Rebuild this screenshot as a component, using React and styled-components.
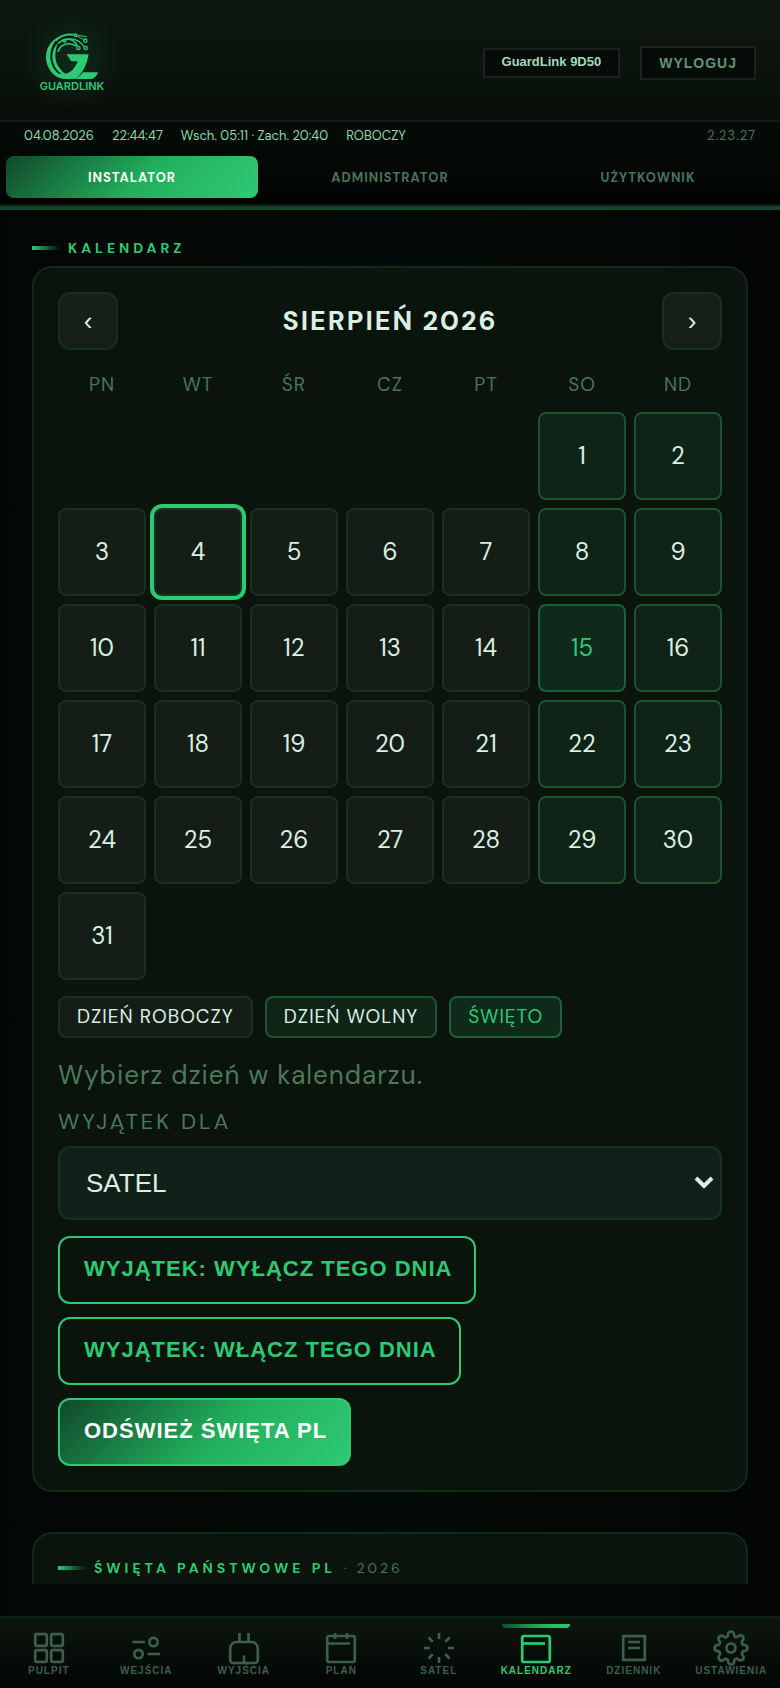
import React, { useState } from 'react';
import styled, { createGlobalStyle, css } from 'styled-components';
import { FiSettings } from 'react-icons/fi';

const sans = '"DM Sans", Inter, sans-serif';
const arial = '"Liberation Sans", Arial, sans-serif';
const accent = '#2ec973';
const muted = '#477559';
const gradient = 'linear-gradient(135deg, #11482b 0%, #22b05c 55%, #2fc976 100%)';

const GlobalStyle = createGlobalStyle`
  * {
    box-sizing: border-box;
  }
  body {
    margin: 0;
    background: #030806;
    color: #d9f0e2;
    font-family: ${sans};
  }
`;

const Page = styled.div`
  display: flex;
  flex-direction: column;
  height: 100vh;
  background: linear-gradient(90deg, #020604 0%, #040a07 50%, #020503 100%);
`;

const Header = styled.header`
  display: flex;
  align-items: center;
  justify-content: space-between;
  height: 122px;
  padding: 4px 24px 0 27px;
  border-bottom: 2px solid #141b16;
  background:
    radial-gradient(circle at 72px 60px, #0e2a1b 0, transparent 50px),
    linear-gradient(180deg, #0d1810 0%, #080f0a 100%);
`;

const Logo = styled.div`
  display: flex;
  flex-direction: column;
  align-items: center;
  width: 90px;
  color: ${accent};
  font: 600 11px/12px Inter, sans-serif;
`;

const HeaderActions = styled.div`
  display: flex;
  align-items: center;
  gap: 20px;
  padding-top: 2px;
`;

const Device = styled.div`
  height: 30px;
  padding: 0 17px;
  border: 2px solid #1c231e;
  background: #050c08;
  color: #a3dbb8;
  font: bold 13px/24px ${arial};
`;

const Logout = styled.button`
  height: 34px;
  padding: 0 17px;
  border: 2px solid #1c231e;
  background: #050c08;
  color: #5f9673;
  font: bold 14px/20px ${arial};
  letter-spacing: 1px;
`;

const Toolbar = styled.div`
  border-bottom: 4px solid #10482b;
  background: linear-gradient(180deg, #050c08 0%, #010302 100%);
`;

const Status = styled.div`
  display: flex;
  gap: 18px;
  padding: 4px 24px;
  color: #86dba4;
  font-size: 13px;
  line-height: 20px;
`;

const Version = styled.span`
  margin-left: auto;
  color: ${muted};
  letter-spacing: 1px;
`;

const Tabs = styled.div`
  display: grid;
  grid-template-columns: repeat(3, 1fr);
  gap: 6px;
  padding: 6px;
  border-bottom: 2px solid #121713;
`;

const Tab = styled.button`
  height: 42px;
  padding: 2px 0 0;
  border: 0;
  border-radius: 8px;
  background: ${(p) => (p.$active ? gradient : 'transparent')};
  color: ${(p) => (p.$active ? '#fff' : muted)};
  font: bold 13px/16px ${sans};
  letter-spacing: 1px;
`;

const Main = styled.main`
  flex: 1;
  min-height: 0;
  overflow: hidden;
  margin-bottom: 32px;
  padding: 28px 32px 0;
`;

const SectionTitle = styled.h2`
  display: flex;
  align-items: center;
  gap: 8px;
  margin: 0;
  color: ${accent};
  font-size: 14px;
  font-weight: 700;
  line-height: 20px;
  letter-spacing: 4px;
  &::before {
    content: '';
    width: 28px;
    height: 4px;
    background: linear-gradient(90deg, ${accent}, transparent);
  }
`;

const Year = styled.span`
  color: ${muted};
  font-weight: 400;
  letter-spacing: 3px;
`;

const Card = styled.section`
  margin: 8px 0 40px;
  padding: 24px;
  border: 2px solid #10291a;
  border-radius: 20px;
  background: #0a130c;
`;

const MonthBar = styled.div`
  display: flex;
  align-items: center;
  justify-content: space-between;
`;

const Arrow = styled.button`
  width: 60px;
  height: 58px;
  border: 2px solid #173021;
  border-radius: 12px;
  background: #171f19;
  color: #d9f0e2;
  font: 26px/28px ${arial};
`;

const Month = styled.h1`
  margin: 0;
  font-size: 27px;
  font-weight: 700;
  line-height: 32px;
  letter-spacing: 2px;
`;

const Grid = styled.div`
  display: grid;
  grid-template-columns: repeat(7, 1fr);
  gap: 8px;
`;

const Weekdays = styled(Grid)`
  padding: 22px 0 14px;
  color: ${muted};
  font-size: 19px;
  line-height: 26px;
  letter-spacing: 1px;
  text-align: center;
`;

const kinds = {
  work: css`
    border-color: #193022;
    background: #151d17;
    color: #d9f0e2;
  `,
  free: css`
    border-color: #1d5430;
    background: #0f2316;
    color: #d9f0e2;
  `,
  holiday: css`
    border-color: #1b6139;
    background: #0f2a1b;
    color: ${accent};
  `,
};

const Day = styled.button`
  aspect-ratio: 1;
  padding: 0;
  border: 2px solid;
  border-radius: 8px;
  ${(p) => kinds[p.$kind]}
  font: 24px/28px ${sans};
  grid-column-start: ${(p) => p.$start || 'auto'};
  box-shadow: ${(p) => (p.$selected ? `0 0 0 4px ${accent}` : 'none')};
`;

const Legend = styled.div`
  display: flex;
  flex-wrap: wrap;
  gap: 12px;
  margin: 16px 0;
`;

const LegendItem = styled.span`
  padding: 6px 17px;
  border: 2px solid;
  border-radius: 8px;
  ${(p) => kinds[p.$kind]}
  font-size: 19px;
  line-height: 26px;
  letter-spacing: 1px;
`;

const Hint = styled.p`
  margin: 0;
  color: #4a7a5a;
  font-size: 26px;
  line-height: 42px;
  letter-spacing: 1px;
`;

const Label = styled.label`
  display: block;
  margin: 12px 0 10px;
  color: #4a7a5a;
  font-size: 22px;
  line-height: 28px;
  letter-spacing: 3px;
`;

const SelectBox = styled.div`
  display: grid;
  align-items: center;
  margin-bottom: 16px;
  & > * {
    grid-area: 1 / 1;
  }
  & > svg {
    justify-self: end;
    margin-right: 8px;
    pointer-events: none;
  }
`;

const Select = styled.select`
  appearance: none;
  width: 100%;
  height: 74px;
  padding: 0 26px;
  border: 2px solid #173024;
  border-radius: 12px;
  background: #12201a;
  color: #d9f0e2;
  font: 26px/32px ${arial};
`;

const Actions = styled.div`
  display: flex;
  flex-direction: column;
  align-items: flex-start;
  gap: 13px;
`;

const Action = styled.button`
  height: 68px;
  padding: 0 22px 2px 24px;
  border: 2px solid ${accent};
  border-radius: 12px;
  background: ${(p) => (p.$primary ? gradient : 'transparent')};
  color: ${(p) => (p.$primary ? '#fff' : accent)};
  font: bold 22px/28px ${arial};
  letter-spacing: 1px;
`;

const BottomNav = styled.nav`
  display: grid;
  grid-template-columns: repeat(8, 1fr);
  height: 72px;
  border-top: 2px solid #0d2417;
  background: linear-gradient(180deg, #0c170f 0%, #020504 100%);
`;

const NavItem = styled.a`
  position: relative;
  display: flex;
  flex-direction: column;
  align-items: center;
  padding-top: 12px;
  color: ${(p) => (p.$active ? accent : '#3c5f4a')};
  font: bold 10px/10px ${arial};
  letter-spacing: 1px;
  text-decoration: none;
  ${(p) =>
    p.$active &&
    css`
      &::before {
        content: '';
        position: absolute;
        top: 6px;
        left: 15%;
        right: 15%;
        height: 4px;
        border-radius: 0 0 4px 4px;
        background: ${gradient};
      }
    `}
`;

const Icon = ({ children }) => (
  <svg width="36" height="36" viewBox="0 0 36 36" fill="none" stroke="currentColor" strokeWidth="2.7">
    {children}
  </svg>
);

const navItems = [
  {
    label: 'PULPIT',
    icon: (
      <Icon>
        <rect x="4.2" y="4.2" width="11.6" height="11.6" rx="1.5" />
        <rect x="20.2" y="4.2" width="11.6" height="11.6" rx="1.5" />
        <rect x="4.2" y="20.2" width="11.6" height="11.6" rx="1.5" />
        <rect x="20.2" y="20.2" width="11.6" height="11.6" rx="1.5" />
      </Icon>
    ),
  },
  {
    label: 'WEJŚCIA',
    icon: (
      <Icon>
        <path d="M4.5 12H17M19.5 24H32" />
        <circle cx="25.5" cy="12" r="4.2" />
        <circle cx="10.5" cy="24" r="4.2" />
      </Icon>
    ),
  },
  {
    label: 'WYJŚCIA',
    icon: (
      <Icon>
        <path d="M13.5 3v9M22.5 3v9M18 25.5V33" />
        <path d="M10.5 12h15a6.3 6.3 0 0 1 6.3 6.3V30a3 3 0 0 1-3 3H7.2a3 3 0 0 1-3-3V18.3A6.3 6.3 0 0 1 10.5 12z" />
      </Icon>
    ),
  },
  {
    label: 'PLAN',
    icon: (
      <Icon>
        <rect x="4.2" y="6" width="27.6" height="26" rx="2" />
        <path d="M4.5 13.5H27M12 3v6M24 3v6" />
      </Icon>
    ),
  },
  {
    label: 'SATEL',
    icon: (
      <Icon>
        <path d="M18 3v6M18 27v6M3 18h6M27 18h6M7.5 7.5l4.2 4.2M24.3 24.3l4.2 4.2M7.5 28.5l4.2-4.2M24.3 11.7l4.2-4.2" />
      </Icon>
    ),
  },
  {
    label: 'KALENDARZ',
    active: true,
    icon: (
      <Icon>
        <rect x="4.2" y="6" width="27.6" height="26" rx="2" />
        <path d="M4.5 13.5H27" />
      </Icon>
    ),
  },
  {
    label: 'DZIENNIK',
    icon: (
      <Icon>
        <path d="M7.2 6.2h21.6v23.6H7.2zM12 12h12M12 18h12" />
      </Icon>
    ),
  },
  { label: 'USTAWIENIA', icon: <FiSettings size={36} strokeWidth={1.8} /> },
];

const LogoMark = () => (
  <svg width="56" height="48" viewBox="42 36 168 144" fill="none" stroke="currentColor">
    <g fill="currentColor" stroke="none">
      <path d="M92 48C56 62 39 100 53 137c10 26 32 40 55 40C76 161 60 135 61 105c1-24 12-43 31-57z" />
      <path d="M84 68c-26 26-20 69 7 91 10 9 24 13 36 12-30-10-51-34-51-63 0-15 3-28 8-40z" />
      <path d="M110 103h66c-5 29-16 55-38 73l-26 1c-17-2-34-11-45-25 24 15 48 13 62-4 7-8 11-15 14-24h-19z" />
      <path d="M158 157h46c-4 12-12 20-22 20h-46c10-5 17-12 22-20z" />
    </g>
    <path d="M77 62C92 45 110 41 131 44" strokeWidth="6" />
    <path d="M85 70C102 54 129 51 142 78" strokeWidth="5" />
    <path d="M84 95C91 73 116 64 138 78" strokeWidth="5" />
    <path d="M100 60C126 52 148 59 162 80" strokeWidth="4" />
    <path d="M141 48L161 59M144 46L170 50" strokeWidth="3" />
    <g strokeWidth="4">
      <circle cx="137" cy="46" r="4" />
      <circle cx="166" cy="62" r="5" />
      <circle cx="145" cy="84" r="5" />
      <circle cx="167" cy="84" r="5" />
      <circle cx="104" cy="62" r="4" />
    </g>
  </svg>
);

const weekdays = ['PN', 'WT', 'ŚR', 'CZ', 'PT', 'SO', 'ND'];
const days = Array.from({ length: 31 }, (_, i) => i + 1);
const HOLIDAY = 15;

const dayKind = (day) => {
  if (day === HOLIDAY) {
    return 'holiday';
  }
  // 1 August 2026 is a Saturday
  return day % 7 === 1 || day % 7 === 2 ? 'free' : 'work';
};

const App = () => {
  const [selected, setSelected] = useState(4);

  return (
    <Page>
      <GlobalStyle />
      <Header>
        <Logo>
          <LogoMark />
          GUARDLINK
        </Logo>
        <HeaderActions>
          <Device>GuardLink 9D50</Device>
          <Logout>WYLOGUJ</Logout>
        </HeaderActions>
      </Header>
      <Toolbar>
        <Status>
          <span>04.08.2026</span>
          <span>22:44:47</span>
          <span>Wsch. 05:11 · Zach. 20:40</span>
          <span>ROBOCZY</span>
          <Version>2.23.27</Version>
        </Status>
        <Tabs>
          <Tab $active>INSTALATOR</Tab>
          <Tab>ADMINISTRATOR</Tab>
          <Tab>UŻYTKOWNIK</Tab>
        </Tabs>
      </Toolbar>
      <Main>
        <SectionTitle>KALENDARZ</SectionTitle>
        <Card>
          <MonthBar>
            <Arrow aria-label="Poprzedni miesiąc">‹</Arrow>
            <Month>SIERPIEŃ 2026</Month>
            <Arrow aria-label="Następny miesiąc">›</Arrow>
          </MonthBar>
          <Weekdays>
            {weekdays.map((name) => (
              <span key={name}>{name}</span>
            ))}
          </Weekdays>
          <Grid>
            {days.map((day) => (
              <Day
                key={day}
                $kind={dayKind(day)}
                $start={day === 1 ? 6 : undefined}
                $selected={day === selected}
                onClick={() => setSelected(day)}
              >
                {day}
              </Day>
            ))}
          </Grid>
          <Legend>
            <LegendItem $kind="work">DZIEŃ ROBOCZY</LegendItem>
            <LegendItem $kind="free">DZIEŃ WOLNY</LegendItem>
            <LegendItem $kind="holiday">ŚWIĘTO</LegendItem>
          </Legend>
          <Hint>Wybierz dzień w kalendarzu.</Hint>
          <Label htmlFor="target">WYJĄTEK DLA</Label>
          <SelectBox>
            <Select id="target">
              <option>SATEL</option>
            </Select>
            <svg width="20" height="14" viewBox="0 0 20 14" fill="none" stroke="#d9f0e2" strokeWidth="4">
              <path d="M2 2l8 8 8-8" />
            </svg>
          </SelectBox>
          <Actions>
            <Action>WYJĄTEK: WYŁĄCZ TEGO DNIA</Action>
            <Action>WYJĄTEK: WŁĄCZ TEGO DNIA</Action>
            <Action $primary>ODŚWIEŻ ŚWIĘTA PL</Action>
          </Actions>
        </Card>
        <Card>
          <SectionTitle>
            ŚWIĘTA PAŃSTWOWE PL <Year>· 2026</Year>
          </SectionTitle>
        </Card>
      </Main>
      <BottomNav>
        {navItems.map((item) => (
          <NavItem key={item.label} href="#" $active={item.active}>
            {item.icon}
            {item.label}
          </NavItem>
        ))}
      </BottomNav>
    </Page>
  );
};

export default App;
